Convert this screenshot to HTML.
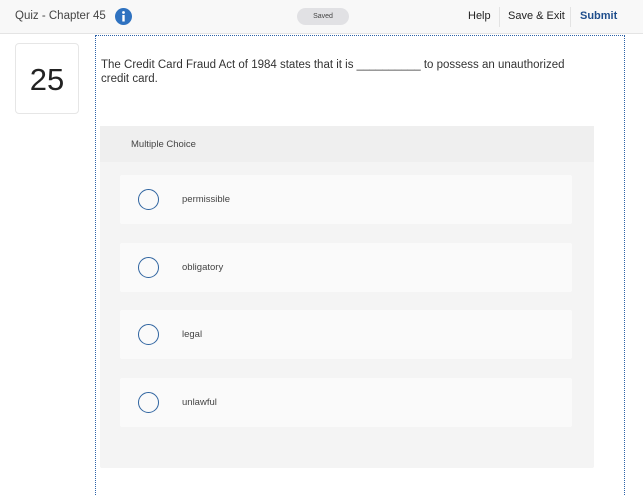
<!DOCTYPE html>
<html><head><meta charset="utf-8"><style>
*{margin:0;padding:0;box-sizing:border-box}
body{width:643px;height:485px;overflow:hidden;background:#fff;font-family:"Liberation Sans",sans-serif;color:#333;position:relative}
.hdr{position:absolute;left:0;top:0;width:643px;height:34px;background:#f8f8f8;border-bottom:1px solid #e4e4e4}
.t{position:absolute;top:10px;font-size:11.5px}
.saved{position:absolute;left:297px;top:8px;width:52px;height:17px;border-radius:9px;background:#e1e1e4;font-size:7px;text-align:center;line-height:17px;color:#444}
.sep{position:absolute;top:7px;width:1px;height:20px;background:#e3e3e3}
.box{position:absolute;left:95px;top:35px;width:530px;height:460px;border-left:1px dotted #2c62a8;border-right:1px dotted #2c62a8;border-top:1px dotted #2c62a8}
.num{position:absolute;left:15px;top:43px;width:64px;height:71px;border:1px solid #e6e6e6;border-radius:4px;font-size:31px;text-align:center;line-height:71px;color:#222}
.q{position:absolute;left:101px;top:58px;font-size:11.5px;line-height:14px;color:#333}
.panel{position:absolute;left:100px;top:126px;width:494px;height:342px;background:#f4f4f4;border-radius:2px}
.ph{height:36px;background:#efefef;font-size:9.5px;line-height:37px;padding-left:31px;color:#444}
.opt{position:absolute;left:20px;width:452px;height:49px;background:#fafafa;border-radius:2px}
.opt i{position:absolute;left:18px;top:14px;width:21px;height:21px;border:1.5px solid #2f64a0;border-radius:50%}
.opt span{position:absolute;left:62px;top:19px;font-size:9.5px;color:#444}
</style></head><body>
<div class="hdr">
<div class="t" style="left:15px;color:#444">Quiz - Chapter 45</div>
<svg style="position:absolute;left:115px;top:8px" width="17" height="17"><circle cx="8.5" cy="8.5" r="8.5" fill="#2f72c0"/><circle cx="8.5" cy="4.5" r="1.4" fill="#fff"/><rect x="7.3" y="7" width="2.4" height="6.5" fill="#fff"/></svg>
<div class="saved">Saved</div>
<div class="t" style="left:468px;font-size:11px;color:#222">Help</div>
<div class="sep" style="left:499px"></div>
<div class="t" style="left:508px;font-size:11px;color:#222">Save &amp; Exit</div>
<div class="sep" style="left:570px"></div>
<div class="t" style="left:580px;font-size:11px;color:#1f4e8c;font-weight:bold">Submit</div>
</div>
<div class="box"></div>
<div class="num">25</div>
<div class="q">The Credit Card Fraud Act of 1984 states that it is __________ to possess an unauthorized<br>credit card.</div>
<div class="panel">
<div class="ph">Multiple Choice</div>
<div class="opt" style="top:49px"><i></i><span>permissible</span></div>
<div class="opt" style="top:117px"><i></i><span>obligatory</span></div>
<div class="opt" style="top:184px"><i></i><span>legal</span></div>
<div class="opt" style="top:252px"><i></i><span>unlawful</span></div>
</div>
</body></html>
